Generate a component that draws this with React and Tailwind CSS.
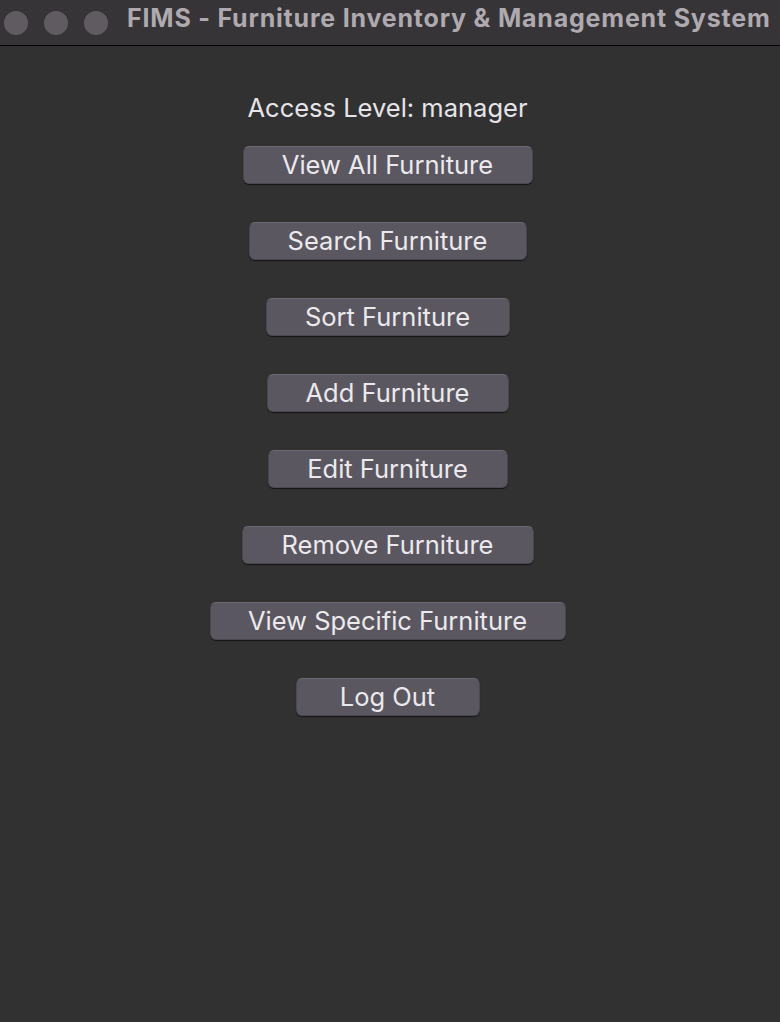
import React from "react";

const buttons = [
  { label: "View All Furniture", w: "w-[290px]" },
  { label: "Search Furniture", w: "w-[278px]" },
  { label: "Sort Furniture", w: "w-[244px]" },
  { label: "Add Furniture", w: "w-[242px]" },
  { label: "Edit Furniture", w: "w-[240px]" },
  { label: "Remove Furniture", w: "w-[292px]" },
  { label: "View Specific Furniture", w: "w-[356px]" },
  { label: "Log Out", w: "w-[184px]" },
];

const App = () => {
  return (
    <div
      className="flex flex-col h-[1022px] w-[780px] bg-[#313131] overflow-hidden"
      style={{ fontFamily: "Inter, 'Noto Sans', sans-serif" }}
    >
      {/* title bar */}
      <div className="flex items-center h-[46px] bg-[#373438] border-b border-black shrink-0">
        <div className="flex items-center gap-4 pl-[4px]">
          <span className="w-6 h-6 rounded-full bg-[#5f5b60]" />
          <span className="w-6 h-6 rounded-full bg-[#5f5b60]" />
          <span className="w-6 h-6 rounded-full bg-[#5f5b60]" />
        </div>
        <h1 className="ml-[19px] -mt-[8px] text-[25px] tracking-[0.8px] font-bold text-[#aeaaaf] whitespace-nowrap">
          FIMS - Furniture Inventory &amp; Management System
        </h1>
      </div>

      {/* menu */}
      <div className="flex flex-col items-center pt-[46px] pr-[5px]">
        <p className="text-[25.5px] text-[#e6e4e8] leading-[32px] mb-[22px]">Access Level: manager</p>
        <div className="flex flex-col items-center gap-[38px]">
          {buttons.map((b) => (
            <button
              key={b.label}
              className={`${b.w} h-[38px] rounded-[6px] bg-[#5a5760] border border-[#4a474f] border-t-[#6c6971] shadow-[0_1px_1px_rgba(0,0,0,0.6)] text-[25.5px] text-[#ebe9ed] leading-none`}
            >
              {b.label}
            </button>
          ))}
        </div>
      </div>
    </div>
  );
};

export default App;
